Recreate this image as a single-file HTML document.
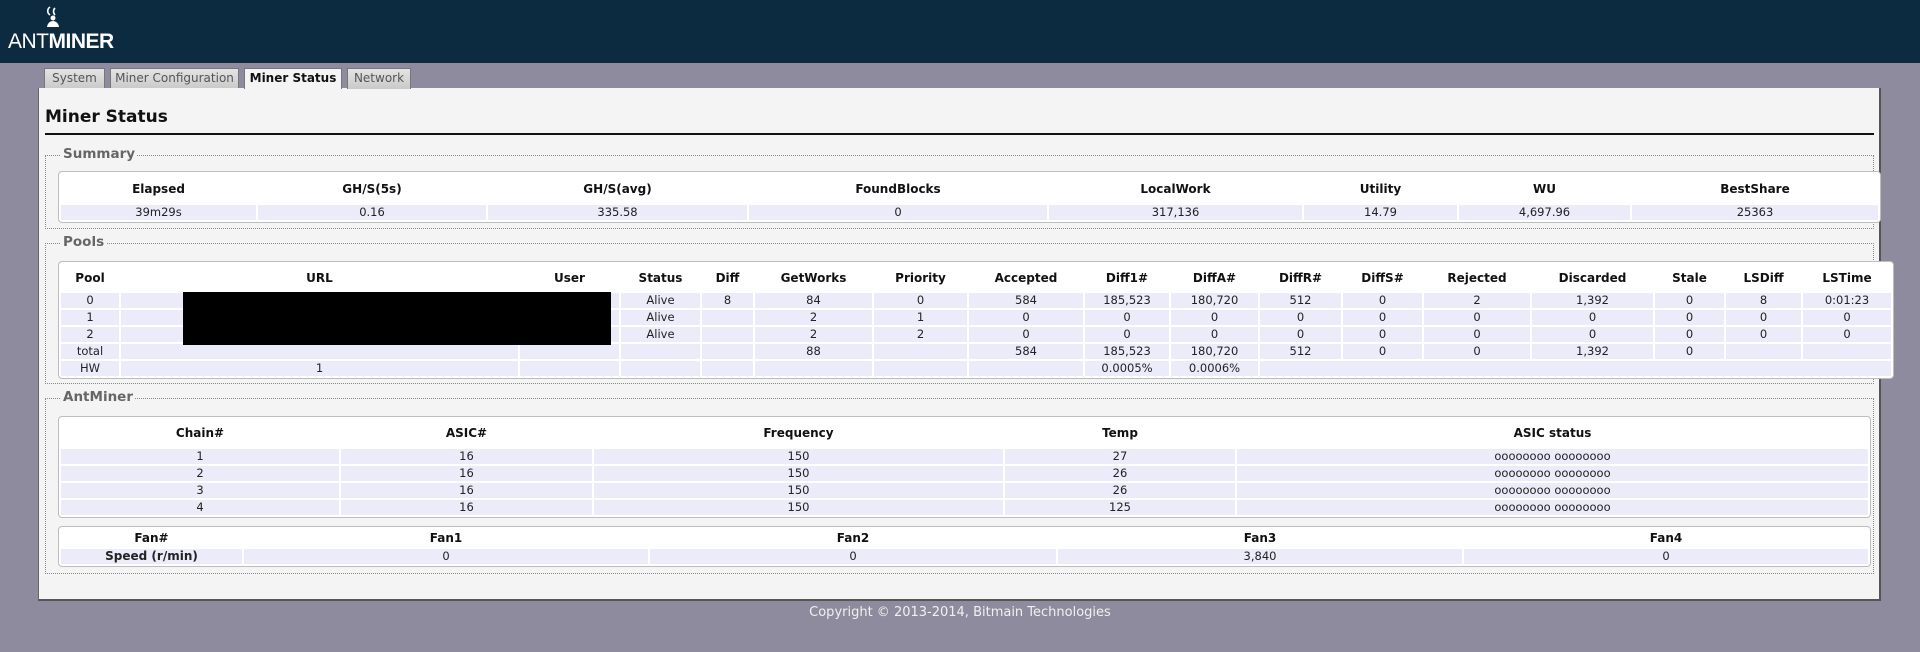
<!DOCTYPE html>
<html><head><meta charset="utf-8"><style>
*{box-sizing:border-box;margin:0;padding:0}
body{width:1920px;height:652px;background:#8f8b9e;font-family:"DejaVu Sans","Liberation Sans",sans-serif;font-size:11.5px;color:#222;position:relative;overflow:hidden}
#hdr{position:absolute;left:0;top:0;width:1920px;height:63px;background:#0c2a40}
.logo{position:absolute;left:8px;top:30px;color:#fff;font-family:"Liberation Sans",sans-serif;font-size:21px;letter-spacing:-0.5px}
.tab{position:absolute;top:68px;height:21px;border:1px solid #777;border-bottom:none;background:linear-gradient(#e4e4e4,#c9c9c9);color:#555;font-size:12px;text-align:center;line-height:19px}
.tab.act{background:#f4f4f4;color:#111;font-weight:bold;height:21px}
#panel{position:absolute;left:38px;top:88px;width:1843px;height:513px;background:#f4f4f4;border-right:2px solid #555;border-bottom:2px solid #555;border-left:1px solid #666}
h1{position:absolute;left:45px;top:107px;font-size:17px;font-weight:bold;color:#111;font-family:"DejaVu Sans",sans-serif}
#rule{position:absolute;left:45px;top:133px;width:1829px;height:2px;background:#111}
.fs{position:absolute;left:45px;width:1829px;border:1px dotted #888}
.lg{position:absolute;left:15px;top:-10px;background:#f4f4f4;padding:0 2px;color:#666;font-weight:bold;font-size:13.5px}
table{position:absolute;left:58px;table-layout:fixed;border-collapse:separate;border-spacing:2px;background:#fff;border:1px solid #bdbdbd;border-radius:4px}
td,th{text-align:center;padding:0;overflow:hidden;white-space:nowrap}
th{font-weight:bold;font-size:12px;color:#111}
td{background:#ebebfa;height:15px;line-height:15px}
#foot{position:absolute;left:0;width:1920px;top:605px;text-align:center;color:#f0f0f0;font-size:13px}
</style></head><body>
<div id="hdr">
<svg style="position:absolute;left:42px;top:5px" width="22" height="26" viewBox="0 0 22 26"><path d="M8 2 C5 4 5 8 8 10 M13 3 C11 5 11 8 13 10" stroke="#fff" stroke-width="1.6" fill="none"/><path d="M5 22 C6 14 16 14 17 22 Z" fill="#fff"/><circle cx="11" cy="13" r="2.5" fill="#fff"/></svg>
<div class="logo">ANT<b>MINER</b></div>
</div>
<div class="tab" style="left:44px;width:61px">System</div>
<div class="tab" style="left:110px;width:129px">Miner Configuration</div>
<div id="panel"></div>
<div class="tab act" style="left:244px;width:98px">Miner Status</div>
<div class="tab" style="left:347px;width:64px">Network</div>
<h1>Miner Status</h1>
<div id="rule"></div>

<div class="fs" style="top:155px;height:74px"><div class="lg">Summary</div></div>
<table style="top:171px;width:1803px">
<colgroup><col style="width:195px"><col style="width:228px"><col style="width:259px"><col style="width:298px"><col style="width:253px"><col style="width:153px"><col style="width:171px"><col style="width:246px"></colgroup>
<tr style="height:29px"><th>Elapsed</th><th>GH/S(5s)</th><th>GH/S(avg)</th><th>FoundBlocks</th><th>LocalWork</th><th>Utility</th><th>WU</th><th>BestShare</th></tr>
<tr><td>39m29s</td><td>0.16</td><td>335.58</td><td>0</td><td>317,136</td><td>14.79</td><td>4,697.96</td><td>25363</td></tr>
</table>

<div class="fs" style="top:243px;height:141px"><div class="lg">Pools</div></div>
<table style="top:261px;width:1802px">
<colgroup><col style="width:58px"><col style="width:397px"><col style="width:99px"><col style="width:79px"><col style="width:51px"><col style="width:117px"><col style="width:93px"><col style="width:114px"><col style="width:84px"><col style="width:87px"><col style="width:81px"><col style="width:79px"><col style="width:106px"><col style="width:121px"><col style="width:69px"><col style="width:75px"><col style="width:88px"></colgroup>
<tr style="height:27px"><th>Pool</th><th>URL</th><th>User</th><th>Status</th><th>Diff</th><th>GetWorks</th><th>Priority</th><th>Accepted</th><th>Diff1#</th><th>DiffA#</th><th>DiffR#</th><th>DiffS#</th><th>Rejected</th><th>Discarded</th><th>Stale</th><th>LSDiff</th><th>LSTime</th></tr>
<tr><td>0</td><td></td><td></td><td>Alive</td><td>8</td><td>84</td><td>0</td><td>584</td><td>185,523</td><td>180,720</td><td>512</td><td>0</td><td>2</td><td>1,392</td><td>0</td><td>8</td><td>0:01:23</td></tr>
<tr><td>1</td><td></td><td></td><td>Alive</td><td></td><td>2</td><td>1</td><td>0</td><td>0</td><td>0</td><td>0</td><td>0</td><td>0</td><td>0</td><td>0</td><td>0</td><td>0</td></tr>
<tr><td>2</td><td></td><td></td><td>Alive</td><td></td><td>2</td><td>2</td><td>0</td><td>0</td><td>0</td><td>0</td><td>0</td><td>0</td><td>0</td><td>0</td><td>0</td><td>0</td></tr>
<tr><td>total</td><td></td><td></td><td></td><td></td><td>88</td><td></td><td>584</td><td>185,523</td><td>180,720</td><td>512</td><td>0</td><td>0</td><td>1,392</td><td>0</td><td></td><td></td></tr>
<tr><td>HW</td><td>1</td><td></td><td></td><td></td><td></td><td></td><td></td><td>0.0005%</td><td>0.0006%</td><td colspan="7"></td></tr>
</table>
<div style="position:absolute;left:183px;top:292px;width:428px;height:53px;background:#000"></div>

<div class="fs" style="top:398px;height:176px"><div class="lg">AntMiner</div></div>
<table style="top:416px;width:1801px">
<colgroup><col style="width:278px"><col style="width:251px"><col style="width:409px"><col style="width:230px"><col style="width:631px"></colgroup>
<tr style="height:28px"><th>Chain#</th><th>ASIC#</th><th>Frequency</th><th>Temp</th><th>ASIC status</th></tr>
<tr><td>1</td><td>16</td><td>150</td><td>27</td><td>oooooooo oooooooo</td></tr>
<tr><td>2</td><td>16</td><td>150</td><td>26</td><td>oooooooo oooooooo</td></tr>
<tr><td>3</td><td>16</td><td>150</td><td>26</td><td>oooooooo oooooooo</td></tr>
<tr><td>4</td><td>16</td><td>150</td><td>125</td><td>oooooooo oooooooo</td></tr>
</table>
<table style="top:526px;width:1801px">
<colgroup><col style="width:181px"><col style="width:404px"><col style="width:406px"><col style="width:404px"><col style="width:404px"></colgroup>
<tr style="height:18px"><th>Fan#</th><th>Fan1</th><th>Fan2</th><th>Fan3</th><th>Fan4</th></tr>
<tr><td style="font-weight:bold;font-size:12px">Speed (r/min)</td><td>0</td><td>0</td><td>3,840</td><td>0</td></tr>
</table>

<div id="foot">Copyright © 2013-2014, Bitmain Technologies</div>
</body></html>
